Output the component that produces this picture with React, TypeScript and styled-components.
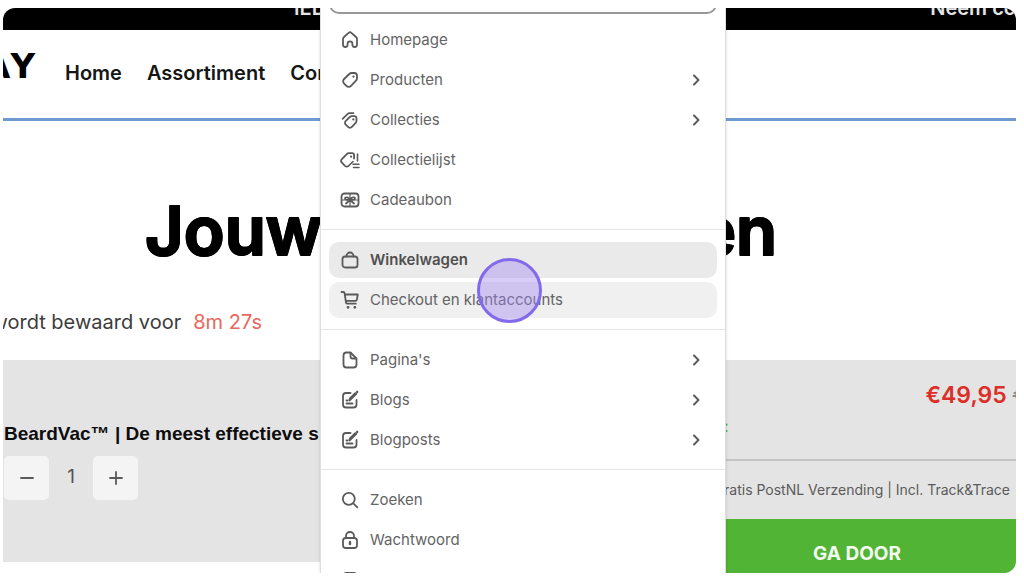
import React from "react";
import styled, { createGlobalStyle } from "styled-components";

const GlobalStyle = createGlobalStyle`
  * { box-sizing: border-box; }
  body { margin: 0; background: #fff; font-family: Inter, "Liberation Sans", sans-serif; }
  button, input { font: inherit; }
`;

const Page = styled.div`
  padding: 8px 8px 14px 3px;
`;

const Frame = styled.main`
  position: relative;
  overflow: hidden;
  border-radius: 12px;
  background: #fff;
`;

const Announcement = styled.div`
  display: flex;
  justify-content: space-between;
  align-items: flex-end;
  height: 22px;
  padding: 0 0 12px 291px;
  overflow: hidden;
  background: #000;
  color: #e4e4e4;
  font-size: 20px;
  font-weight: 600;
  line-height: 20px;
  white-space: nowrap;
`;

const Notice = styled.span`
  flex: none;
`;

const Header = styled.header`
  display: flex;
  align-items: center;
  height: 91px;
  padding-bottom: 2px;
  border-bottom: 3px solid #6f9bd1;
`;

const Logo = styled.a`
  display: flex;
  justify-content: flex-end;
  width: 32px;
  padding-bottom: 14px;
  color: #000;
  font-family: "DejaVu Sans", sans-serif;
  font-size: 34px;
  font-weight: 700;
  font-kerning: none;
  line-height: 32px;
  text-decoration: none;
`;

const Nav = styled.nav`
  display: flex;
  gap: 25px;
  padding-left: 30px;
`;

const NavLink = styled.a`
  color: #161616;
  font-size: 20px;
  font-weight: 600;
  line-height: 28px;
  text-decoration: none;
  white-space: nowrap;
`;

const Title = styled.h1`
  display: flex;
  justify-content: space-between;
  width: 774px;
  margin: 0;
  padding: 70px 0 0 142px;
  color: #000;
  font-size: 67px;
  font-weight: 600;
  line-height: 80px;
  white-space: nowrap;
  -webkit-text-stroke: 2px #000;
  text-shadow: 1px 0 #000, -1px 0 #000, 0 1px #000, 0 -1px #000;
`;

const Reserved = styled.p`
  display: flex;
  justify-content: flex-end;
  gap: 12px;
  width: 259px;
  margin: 0;
  padding: 37px 0 24px;
  color: #3c3c3c;
  font-size: 20px;
  line-height: 28px;
  white-space: nowrap;
`;

const Countdown = styled.span`
  color: #e9675c;
`;

const Cart = styled.section`
  display: grid;
  grid-template-columns: 1fr 318px;
  align-items: start;
`;

const CartItem = styled.div`
  height: 202px;
  padding: 62px 0 0 1px;
  background: #e4e4e4;
`;

const ItemName = styled.h2`
  margin: 0 0 10px;
  width: 316px;
  overflow: hidden;
  color: #0d0d0d;
  font-family: "Liberation Sans", Arial, sans-serif;
  font-size: 19px;
  font-weight: 700;
  line-height: 24px;
  white-space: nowrap;
`;

const Quantity = styled.div`
  display: flex;
  align-items: center;
`;

const Step = styled.button`
  display: grid;
  place-items: center;
  width: 45px;
  height: 44px;
  padding: 0;
  border: 0;
  border-radius: 5px;
  background: #f4f4f4;
  color: #555;
`;

const Amount = styled.output`
  width: 44px;
  padding-bottom: 2px;
  color: #555;
  font-size: 19px;
  line-height: 24px;
  text-align: center;
`;

const Summary = styled.div`
  overflow: hidden;
  background: #e4e4e4;
`;

const Prices = styled.div`
  display: flex;
  justify-content: flex-end;
  gap: 6px;
  height: 52px;
  margin-right: -12px;
  padding-top: 20px;
  color: #888;
  font-size: 23px;
  line-height: 30px;
`;

const Price = styled.strong`
  color: #dc2f27;
  font-weight: 600;
`;

const Saving = styled.div`
  height: 49px;
  padding: 2px 0 0 26px;
  border-bottom: 2px solid #c4c4c4;
  color: #4fb236;
  font-size: 16px;
  line-height: 24px;
`;

const Shipping = styled.p`
  display: flex;
  justify-content: flex-end;
  margin: 0;
  padding: 17px 6px 18px;
  color: #5b5b5b;
  font-size: 14px;
  line-height: 23px;
  white-space: nowrap;
`;

const Proceed = styled.button`
  display: block;
  width: 100%;
  height: 54px;
  padding: 15px 0 0;
  border: 0;
  background: #52b434;
  color: #f4fbf1;
  font-size: 19px;
  font-weight: 700;
  line-height: 24px;
`;

const Picker = styled.aside`
  position: absolute;
  top: 0;
  bottom: 0;
  left: 317px;
  width: 406px;
  overflow: hidden;
  border: solid #dedede;
  border-width: 0 1px;
  background: #fff;
  box-shadow: 0 0 3px rgba(0, 0, 0, 0.15);
`;

const SearchBox = styled.div`
  display: flex;
  align-items: flex-end;
  height: 6px;
  padding: 0 8px;
`;

const Search = styled.input`
  flex: none;
  width: 100%;
  height: 36px;
  border: 2px solid #999;
  border-radius: 10px;
  background: #fff;
`;

const Group = styled.ul`
  display: flex;
  flex-direction: column;
  gap: 4px;
  margin: 0;
  padding: 12px 8px 11px;
  list-style: none;

  & + & { border-top: 1px solid #e6e6e6; }
  &:first-of-type { padding-top: 8px; }
`;

type Tone = "plain" | "hover" | "selected";
const fills: Record<Tone, string> = { plain: "transparent", hover: "#f0f0f0", selected: "#eaeaea" };

const Entry = styled.button<{ $tone: Tone }>`
  display: flex;
  align-items: center;
  gap: 10px;
  width: 100%;
  height: 36px;
  padding: 0 12px 1px 11px;
  border: 0;
  border-radius: 10px;
  background: ${(p) => fills[p.$tone]};
  color: ${(p) => (p.$tone === "selected" ? "#505050" : "#646464")};
  font-size: 15px;
  font-weight: ${(p) => (p.$tone === "selected" ? 600 : 400)};
  line-height: 24px;
  text-align: left;
`;

const Label = styled.span`
  flex: 1;
`;

const Glyph = styled.svg`
  flex: none;
  fill: none;
  stroke: #5a5a5a;
  stroke-width: 1.8;
  stroke-linecap: round;
  stroke-linejoin: round;
`;

const Pointer = styled.div`
  position: absolute;
  top: 250px;
  left: 474px;
  width: 65px;
  height: 65px;
  border: 3px solid #8369ec;
  border-radius: 50%;
  background: rgba(160, 135, 238, 0.42);
`;

const note = (
  <>
    <path d="M10.500 3H6a3 3 0 0 0-3 3v8.500a3 3 0 0 0 3 3h7.500a3 3 0 0 0 3-3V10" />
    <path d="M9.500 10.500l.5-2L15 3.500M17 1.500l.5.5M6.500 10.500h1M6.500 13.500h6" />
    <path d="M10 9.500l6-6" strokeWidth="2.600" />
  </>
);

const glyphs: Record<string, React.ReactNode> = {
  home: <path d="M3 9.200c0-.9.400-1.700 1-2.200l4.600-4.200a2 2 0 0 1 2.800 0L16 7c.6.500 1 1.300 1 2.200v5.300c0 1.400-1 2.500-2.400 2.500-1.300 0-2.200-1-2.200-2.200v-1.100a2.400 2.400 0 0 0-4.800 0v1.100c0 1.300-1 2.200-2.300 2.200S3 15.900 3 14.500z" />,
  tag: (
    <>
      <path d="M9.300 4c.7-.7 1.500-1 2.400-1h2.600A2.700 2.700 0 0 1 17 5.700v2.600c0 .9-.3 1.700-1 2.400l-5 5.200a3.200 3.200 0 0 1-4.600 0l-2.300-2.300a3.200 3.200 0 0 1 0-4.600z" />
      <path d="M13.400 6.600h.1" strokeWidth="2.200" />
    </>
  ),
  tags: (
    <>
      <path d="M9.800 7c.6-.6 1.200-.8 2-.8h2.400c1.400 0 2.300 1 2.300 2.300v2.300c0 .8-.3 1.500-.8 2.100l-3.800 4a2.700 2.700 0 0 1-3.900 0l-2.200-2.200a2.700 2.700 0 0 1 0-3.900z" />
      <path d="M13.300 9.400h.1" strokeWidth="2.200" />
      <path d="M2.600 8.900l4.600-4.600c.8-.8 1.600-1.200 2.700-1.200H13.500" strokeWidth="1.700" />
    </>
  ),
  tagList: (
    <>
      <path d="M8.500 15.800a2.600 2.600 0 0 1-3.500 0l-3.100-3.100a2.600 2.600 0 0 1 0-3.600l4.800-5c.6-.6 1.300-.9 2.200-.9h3.200c1.200 0 2 .9 2 2v3.300" />
      <path d="M11 6.600h.1" strokeWidth="2.200" />
      <path d="M17.500 4v7M13 14.200h6M13.500 17.500H19M9 15.500l4-4" strokeWidth="1.600" />
    </>
  ),
  gift: (
    <>
      <rect x="1.500" y="3.500" width="17" height="13" rx="3" />
      <path d="M2 10h16M10 4v12" strokeWidth="1.200" />
      <path d="M10 10c-1-3-5-3.500-5-1.200C5 10 7 10 10 10zm0 0c1-3 5-3.500 5-1.200C15 10 13 10 10 10zm0 0l-4 3.500M10 10l4 3.500" />
    </>
  ),
  bag: (
    <>
      <rect x="2.500" y="6.500" width="15" height="11" rx="2.600" />
      <path d="M6.500 6.500V6a3.500 3.500 0 0 1 7 0v.5" />
    </>
  ),
  cart: (
    <>
      <path d="M1.500 2h1.700c.8 0 1.300.5 1.400 1.200L6 12.500c.1.700.7 1.200 1.400 1.200h8.400M4.800 4.500h13l-.9 5.200c-.1.700-.7 1.200-1.400 1.200H5.800" />
      <path d="M8 17.300h.1M14.800 17.300h.1" strokeWidth="2.800" />
    </>
  ),
  page: (
    <>
      <path d="M10.500 2.500H6.500a3 3 0 0 0-3 3v9a3 3 0 0 0 3 3h7a3 3 0 0 0 3-3v-6z" />
      <path d="M10.500 2.800V6.500a2 2 0 0 0 2 2h3.800" />
    </>
  ),
  note,
  search: (
    <>
      <circle cx="8.800" cy="8.800" r="6" />
      <path d="M13.300 13.300l4 4" />
    </>
  ),
  lock: (
    <>
      <rect x="3" y="8" width="14" height="10" rx="2.800" />
      <path d="M6 8V6a4 4 0 0 1 8 0v2" />
      <path d="M10 12v2" strokeWidth="2.400" />
    </>
  ),
  block: <rect x="4" y="3" width="12" height="14" rx="2" />,
};

type Item = { icon: string; label?: string; more?: boolean; tone?: Tone };

const groups: Item[][] = [
  [
    { icon: "home", label: "Homepage" },
    { icon: "tag", label: "Producten", more: true },
    { icon: "tags", label: "Collecties", more: true },
    { icon: "tagList", label: "Collectielijst" },
    { icon: "gift", label: "Cadeaubon" },
  ],
  [
    { icon: "bag", label: "Winkelwagen", tone: "selected" },
    { icon: "cart", label: "Checkout en klantaccounts", tone: "hover" },
  ],
  [
    { icon: "page", label: "Pagina's", more: true },
    { icon: "note", label: "Blogs", more: true },
    { icon: "note", label: "Blogposts", more: true },
  ],
  [
    { icon: "search", label: "Zoeken" },
    { icon: "lock", label: "Wachtwoord" },
    { icon: "block" },
  ],
];

export default function App() {
  return (
    <Page>
      <GlobalStyle />
      <Frame>
        <Announcement>
          <Notice>IED</Notice>
          <Notice>Neem co</Notice>
        </Announcement>
        <Header>
          <Logo href="#">AY</Logo>
          <Nav>
            <NavLink href="#">Home</NavLink>
            <NavLink href="#">Assortiment</NavLink>
            <NavLink href="#">Con</NavLink>
          </Nav>
        </Header>
        <Title>
          <span>Jouw</span>
          <span>en</span>
        </Title>
        <Reserved>
          <span>wordt bewaard voor</span>
          <Countdown>8m 27s</Countdown>
        </Reserved>
        <Cart>
          <CartItem>
            <ItemName>BeardVac™ | De meest effectieve s</ItemName>
            <Quantity>
              <Step aria-label="Minder">
                <Glyph width="16" height="16" viewBox="0 0 16 16"><path d="M2 8h12" /></Glyph>
              </Step>
              <Amount>1</Amount>
              <Step aria-label="Meer">
                <Glyph width="16" height="16" viewBox="0 0 16 16"><path d="M2 8h12M8 2v12" /></Glyph>
              </Step>
            </Quantity>
          </CartItem>
          <Summary>
            <Prices>
              <Price>€49,95</Price>
              <s>€</s>
            </Prices>
            <Saving>:</Saving>
            <Shipping>Gratis PostNL Verzending | Incl. Track&amp;Trace</Shipping>
            <Proceed>GA DOOR</Proceed>
          </Summary>
        </Cart>
        <Picker>
          <SearchBox>
            <Search aria-label="Zoeken" />
          </SearchBox>
          {groups.map((items, i) => (
            <Group key={i}>
              {items.map((item) => (
                <li key={item.icon + item.label}>
                  <Entry $tone={item.tone ?? "plain"}>
                    <Glyph width="20" height="20" viewBox="0 0 20 20">{glyphs[item.icon]}</Glyph>
                    {item.label && <Label>{item.label}</Label>}
                    {item.more && (
                      <Glyph width="18" height="18" viewBox="0 0 18 18"><path d="M7 4.500l4.500 4.500L7 13.500" strokeWidth="2" /></Glyph>
                    )}
                  </Entry>
                </li>
              ))}
            </Group>
          ))}
        </Picker>
        <Pointer />
      </Frame>
    </Page>
  );
}
